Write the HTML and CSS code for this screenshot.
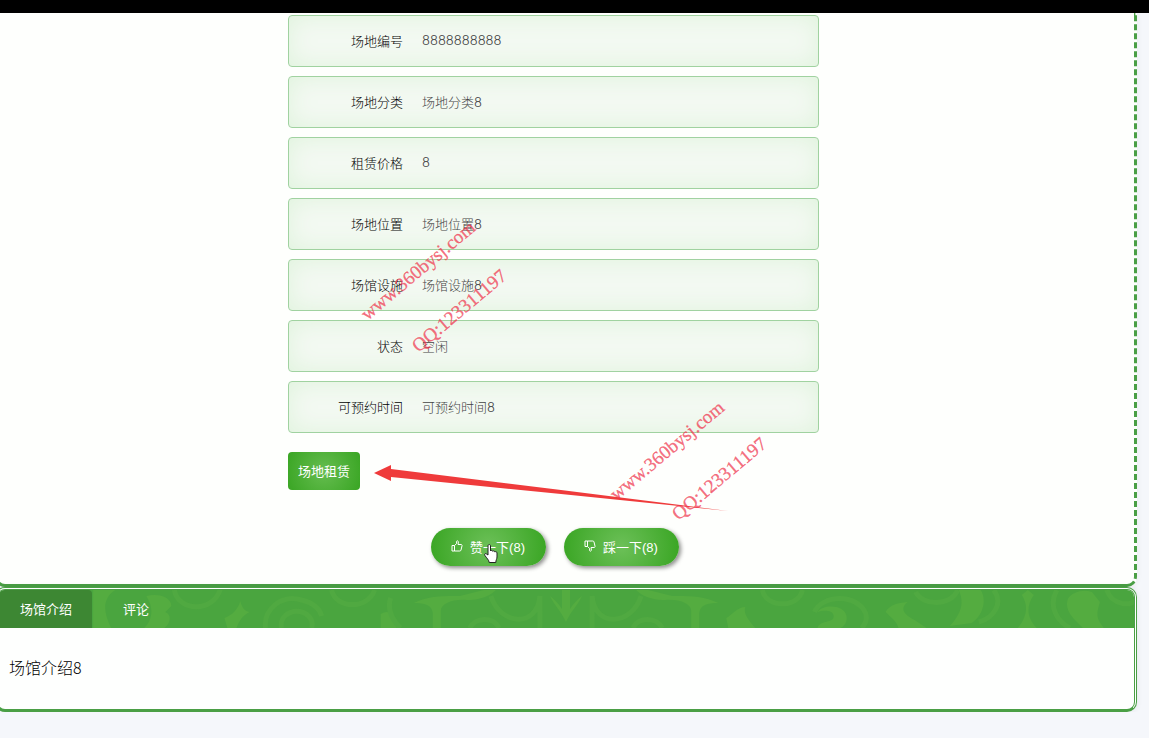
FILE: index.html
```
<!DOCTYPE html>
<html lang="zh-CN">
<head>
    <meta charset="UTF-8">
    <title>场馆详情</title>
    <link rel="stylesheet" href="styles.css">
</head>
<body>
    <div class="top-bar"></div>
    <div class="detail">
        <div class="info">
            <dl class="info-list">
                <div class="item"><dt>场地编号</dt><dd>8888888888</dd></div>
                <div class="item"><dt>场地分类</dt><dd>场地分类8</dd></div>
                <div class="item"><dt>租赁价格</dt><dd>8</dd></div>
                <div class="item"><dt>场地位置</dt><dd>场地位置8</dd></div>
                <div class="item"><dt>场馆设施</dt><dd>场馆设施8</dd></div>
                <div class="item"><dt>状态</dt><dd>空闲</dd></div>
                <div class="item"><dt>可预约时间</dt><dd>可预约时间8</dd></div>
            </dl>
            <button type="button" class="btn-rent">场地租赁</button>
        </div>
        <div class="votes">
            <button type="button" class="btn-vote">
                <svg class="icon" viewBox="0 0 12 12"><path d="M1 5.5h2.5v5.5H1zM3.5 5.5L5.6 3.6V1.4c.2-.9 1.7-.7 1.8.5L7 4.5h3.1c.9 0 1.1.7.9 1.4l-1 4.1c-.2.7-.5 1-1.2 1H3.5"/></svg>
                <span>赞一下(8)</span>
            </button>
            <button type="button" class="btn-vote">
                <svg class="icon" viewBox="0 0 12 12"><path d="M1 1h2.5v5.5H1zM3.5 6.5l2.1 1.9v2.2c.2.9 1.7.7 1.8-.5L7 7.5h3.1c.9 0 1.1-.7.9-1.4L10 2c-.2-.7-.5-1-1.2-1H3.5"/></svg>
                <span>踩一下(8)</span>
            </button>
        </div>
    </div>

    <div class="tabs">
        <div class="tab-title">
            <svg class="pattern" viewBox="0 0 1134 38" preserveAspectRatio="xMidYMid slice">
                <g class="fill">
                    <path d="M93 0h22c-12 8-13 20-4 38H93z"/>
                    <path d="M146 6c14-3 25 2 25 10l-6 6c7 3 5 12-1 16h-20c8-8 10-20 2-32z"/>
                    <path d="M224 28c8-3 13-8 16-17 1 6 4 10 9 11-6 3-10 8-13 16h-9z"/>
                    <path d="M380 24c8-5 15-1 16 14h-16z"/>
                    <path d="M413 13c15-8 36-7 46-7l24-6h12c-8 9-22 10-29 10-15-1-26 4-26 11v17h-8V23c-1-8-8-10-19-10z"/>
                    <path d="M717 13c-15-8-36-7-46-7l-24-6h-12c8 9 22 10 29 10 15-1 26 4 26 11v17h8V23c1-8 8-10 19-10z"/>
                    <path d="M549 6c4 3 9 8 12 13V0h8v19c3-5 8-10 12-13-4 9-11 15-16 26-5-11-12-17-16-26z"/>
                    <path d="M725 28c7-4 11-11 19-11-2 6 2 12 10 21h-27z"/>
                    <path d="M816 38c3-9 18-4 16-13-1-5-10-5-16-3 5-8 27-8 29 4 1 6-2 10-6 12z"/>
                    <path d="M884 22c4-7 11-9 22-10-8 7-4 12 7 18l12 8h-28c-2-7-8-11-13-16z"/>
                    <path d="M957 0h22c6 9 3 25-9 33l-22 3c9-10 16-21 9-36z"/>
                    <path d="M1020 5l6-5 6 5c-8 11-7 23 3 33h-19c9-11 11-22 4-33z"/>
                    <path d="M1066 9c4-7 15-10 24-7l8 10c-3 11-5 15 4 26h-21c-9-9-19-17-15-29z"/>
                </g>
                <g class="line">
                    <path d="M174 0c4 22 39 23 46-1M265 38c-2-19 16-34 36-28 12 3 18 8 20 16M281 38c-3-15 17-22 27-12 5 5 4 9 3 12"/>
                    <path d="M331 0c4 19 36 20 43 0M390 8c-3 8-1 20 10 30M469 38c5-11 24-12 29 0"/>
                    <path d="M490 6c9 29 46 33 49 0v32M640 6c-9 29-46 33-49 0v32M661 38c-5-11-24-12-29 0"/>
                    <path d="M761 0c3 18 36 19 40 0M813 22c8-18 43-18 51 1 2 6 0 11-4 15M914 2c7 14 35 15 42-2"/>
                    <path d="M992 0c10 13 0 28-15 32M1055 0c-9 16 0 31 13 38M1105 0c4 15 25 18 31 8"/>
                </g>
            </svg>
            <button type="button" class="tab active">场馆介绍</button>
            <button type="button" class="tab">评论</button>
        </div>
        <div class="tab-content">场馆介绍8</div>
    </div>

    <!-- overlays -->
    <svg class="arrow" viewBox="0 0 354 46"><path d="M0 8L17 0v4l170 21 167 21-167-17L17 12v4z"/></svg>
    <div class="watermark mark-1">www.360bysj.com</div>
    <div class="watermark mark-2">QQ:123311197</div>
    <div class="watermark mark-3">www.360bysj.com</div>
    <div class="watermark mark-4">QQ:123311197</div>
    <svg class="cursor" viewBox="0 0 14 19"><path d="M4 11V2c0-2 2.500-2 2.500 0v5c.5-1 2-.8 2.200.3.600-.8 1.900-.5 2.100.6.800-.6 2.200-.2 2.200 1.100V13c0 2-1.200 3-1.200 5.500H5.200C5 16 2.500 14 .8 11.300c-.8-1.500.8-2.200 1.700-1.300z"/></svg>
</body>
</html>
```
FILE: styles.css
```
* {
    box-sizing: border-box;
}
body {
    margin: 0;
    position: relative;
    overflow-x: hidden;
    background-color: #f5f7fb;
    font-family: "Liberation Sans", "Noto Sans CJK SC", sans-serif;
    font-size: 13px;
    color: #333;
}
button {
    font-family: inherit;
    font-size: 13px;
    color: #fff;
    border: none;
    cursor: pointer;
}
.top-bar {
    height: 13px;
    background-color: #000;
}
.detail {
    margin: 0 12px 0 -5px;
    padding-top: 2px;
    padding-bottom: 18px;
    background-color: #fefffd;
    border: 3px solid #4a9f45;
    border-top: none;
    border-right-style: dashed;
    border-radius: 0 0 10px 10px;
    box-shadow: 0 0 6px rgba(0, 0, 0, 0.06);
}
.info {
    padding: 0 315px 0 290px;
}
.info-list {
    margin: 0 0 19px;
    display: flex;
    flex-direction: column;
    gap: 9px;
}
.item {
    display: flex;
    align-items: center;
    gap: 19px;
    height: 52px;
    padding-bottom: 2px;
    border: 1px solid #a0d2a0;
    border-radius: 4px;
    background-color: #f3f9f2;
    box-shadow: inset 0 0 24px #dff3dc;
}
.item dt {
    width: 114px;
    text-align: right;
    font-weight: 300;
    font-family: "Noto Sans CJK SC", sans-serif;
    color: #000;
}
.item dd {
    margin: 0;
    color: #444;
    font-weight: 300;
    font-family: Inter, "Noto Sans CJK SC", sans-serif;
}
.btn-rent {
    display: block;
    height: 38px;
    padding: 0 10px 2px;
    border-radius: 4px;
    background: radial-gradient(circle, #66bd50, #39a523);
}
.votes {
    display: flex;
    justify-content: center;
    gap: 18px;
    margin-top: 38px;
    padding-right: 22px;
}
.btn-vote {
    display: flex;
    align-items: center;
    gap: 7px;
    height: 38px;
    padding: 0 21px 2px 20px;
    border-radius: 20px;
    background: radial-gradient(circle, #6cc058, #39a523);
    box-shadow: 2px 2px 4px rgba(0, 0, 0, 0.45);
}
.icon {
    width: 12px;
    height: 12px;
    fill: none;
    stroke: #fff;
    stroke-linejoin: round;
}
.tabs {
    margin: 0 12px 0 -5px;
    border: 3px double #4a9f45;
    border-bottom-style: solid;
    border-radius: 10px;
    overflow: hidden;
    background-color: #fefffe;
    box-shadow: 0 0 6px rgba(0, 0, 0, 0.08);
}
.tab-title {
    position: relative;
    display: flex;
    gap: 11px;
    height: 38px;
    padding-left: 2px;
    background-color: #4aa53f;
}
.pattern {
    position: absolute;
    top: 0;
    left: 2px;
    width: 100%;
    height: 38px;
}
.pattern .fill {
    fill: #54ac40;
}
.pattern .line {
    fill: none;
    stroke: #50a941;
    stroke-width: 5px;
}
.tab {
    position: relative;
    padding: 0 20px 2px;
    background: none;
}
.tab.active {
    background-color: #3d8733;
    border-radius: 4px 4px 0 0;
}
.tab-content {
    padding: 27px 12px 30px 11px;
    color: #000;
    font-family: "Noto Sans CJK SC", sans-serif;
    font-size: 16px;
    font-weight: 300;
    line-height: 24px;
}
.arrow {
    position: absolute;
    left: 374px;
    top: 465px;
    width: 354px;
    height: 46px;
    fill: #ef3b3b;
}
.watermark {
    position: absolute;
    font-family: "Liberation Serif", serif;
    font-size: 19px;
    line-height: 20px;
    white-space: nowrap;
    color: rgba(240, 50, 75, 0.7);
    -webkit-text-stroke: 0.3px rgba(240, 50, 75, 0.7);
    transform: rotate(-40deg);
    transform-origin: 0 100%;
    pointer-events: none;
}
.mark-1 {
    left: 370px;
    top: 304px;
}
.mark-2 {
    left: 421px;
    top: 336px;
}
.mark-3 {
    left: 619px;
    top: 484px;
}
.mark-4 {
    left: 681px;
    top: 504px;
}
.cursor {
    position: absolute;
    left: 484px;
    top: 544px;
    width: 14px;
    height: 19px;
    fill: #fff;
    stroke: #222;
}
```
